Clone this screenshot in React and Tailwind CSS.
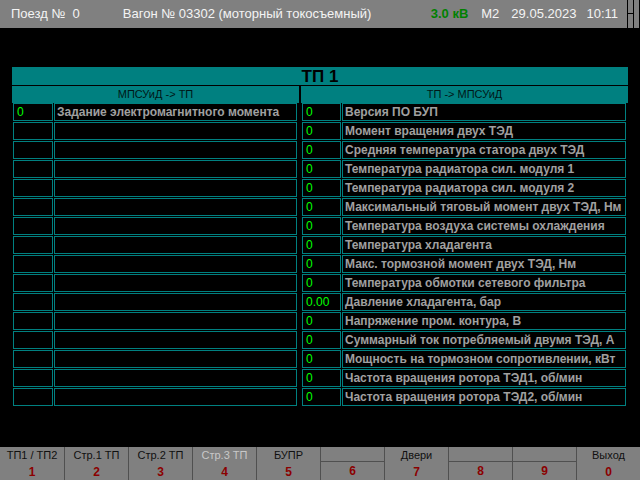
import React from "react";

const rightRows = [
  ["0", "Версия ПО БУП"],
  ["0", "Момент вращения двух ТЭД"],
  ["0", "Средняя температура статора двух ТЭД"],
  ["0", "Температура радиатора сил. модуля 1"],
  ["0", "Температура радиатора сил. модуля 2"],
  ["0", "Максимальный тяговый момент двух ТЭД, Нм"],
  ["0", "Температура воздуха системы охлаждения"],
  ["0", "Температура хладагента"],
  ["0", "Макс. тормозной момент двух ТЭД, Нм"],
  ["0", "Температура обмотки сетевого фильтра"],
  ["0.00", "Давление хладагента, бар"],
  ["0", "Напряжение пром. контура, В"],
  ["0", "Суммарный ток потребляемый двумя ТЭД, А"],
  ["0", "Мощность на тормозном сопротивлении, кВт"],
  ["0", "Частота вращения ротора ТЭД1, об/мин"],
  ["0", "Частота вращения ротора ТЭД2, об/мин"],
];

const leftRows = [["0", "Задание электромагнитного момента"]].concat(
  Array.from({ length: 15 }, () => ["", ""])
);

const buttons = [
  ["ТП1 / ТП2", "1"],
  ["Стр.1 ТП", "2"],
  ["Стр.2 ТП", "3"],
  ["Стр.3 ТП", "4", true],
  ["БУПР", "5"],
  ["", "6"],
  ["Двери", "7"],
  ["", "8"],
  ["", "9"],
  ["Выход", "0"],
];

// one line of the table: value cell + caption cell
const Row = ({ value, label, numW }) => (
  <div className="flex gap-[1px] h-[18px] mb-[1px]">
    <div
      className={`${numW} border border-[#008080] bg-black text-[#00ff00] text-[12px] leading-[16px] pl-[3px]`}
    >
      {value}
    </div>
    <div className="flex-1 border border-[#008080] bg-black text-[#a0a0a0] text-[12px] font-bold leading-[16px] pl-[2px] whitespace-nowrap overflow-hidden">
      {label}
    </div>
  </div>
);

export default function App() {
  return (
    <div
      className="w-[640px] h-[480px] bg-black flex flex-col overflow-hidden"
      style={{ fontFamily: '"Liberation Sans", Arial, sans-serif' }}
    >
      {/* top status bar */}
      <div className="h-[28px] flex shrink-0">
        <div className="w-[627px] bg-[#808080] flex items-center text-[13px] text-[#f4f4f4]">
          <span className="ml-[11px]">Поезд №&nbsp;&nbsp;0</span>
          <span className="ml-[43px]">Вагон № 03302 (моторный токосъемный)</span>
          <span className="ml-auto font-bold text-[#008000]">3.0 кВ</span>
          <span className="ml-[13px]">М2</span>
          <span className="ml-[12px]">29.05.2023</span>
          <span className="ml-[10px] mr-[9px]">10:11</span>
        </div>
        <div className="w-[1px] bg-black" />
        <div className="w-[5px] bg-[#808080] flex flex-col">
          <div className="h-[13px]" />
          <div className="h-[1px] bg-black" />
        </div>
        <div className="w-[1px] bg-black" />
        <div className="w-[5px] bg-[#808080]" />
      </div>

      {/* main panel */}
      <div className="mt-[39px] mx-[12px] w-[616px] flex flex-col">
        <div className="h-[18px] bg-[#008080] flex items-center justify-center pt-[1px] text-[17px] font-bold text-black leading-none">
          ТП 1
        </div>
        <div className="h-[1px] bg-black" />
        <div className="flex">
          {/* left half */}
          <div className="w-[287px] flex flex-col">
            <div className="h-[17px] bg-[#008080] flex items-center justify-center text-[11px] text-[#001818]">
              МПСУиД -&gt; ТП
            </div>
            <div className="pl-[1px] pr-[2px]">
              {leftRows.map((r, i) => (
                <Row key={i} value={r[0]} label={r[1]} numW="w-[40px]" />
              ))}
            </div>
          </div>
          <div className="w-[2px] bg-black" />
          {/* right half */}
          <div className="flex-1 flex flex-col">
            <div className="h-[17px] bg-[#008080] flex items-center justify-center text-[11px] text-[#001818]">
              ТП -&gt; МПСУиД
            </div>
            <div className="pl-[1px] pr-[2px]">
              {rightRows.map((r, i) => (
                <Row key={i} value={r[0]} label={r[1]} numW="w-[39px]" />
              ))}
            </div>
          </div>
        </div>
      </div>

      <div className="flex-1" />

      {/* function keys */}
      <div className="h-[33px] flex bg-[#808080] shrink-0">
        {buttons.map(([label, key, disabled], i) => (
          <div
            key={i}
            className={`w-[64px] flex flex-col ${i > 0 ? "border-l border-[#505050]" : ""}`}
          >
            <div
              className={`h-[16px] flex items-center justify-center text-[11px] ${
                disabled ? "text-[#c8c8c8]" : "text-[#101010]"
              }`}
            >
              {label}
            </div>
            <div className="h-[1px] bg-[#505050]" />
            <div className="flex-1 flex items-center justify-center text-[12px] font-bold text-[#8b0000]">
              {key}
            </div>
          </div>
        ))}
      </div>
    </div>
  );
}
